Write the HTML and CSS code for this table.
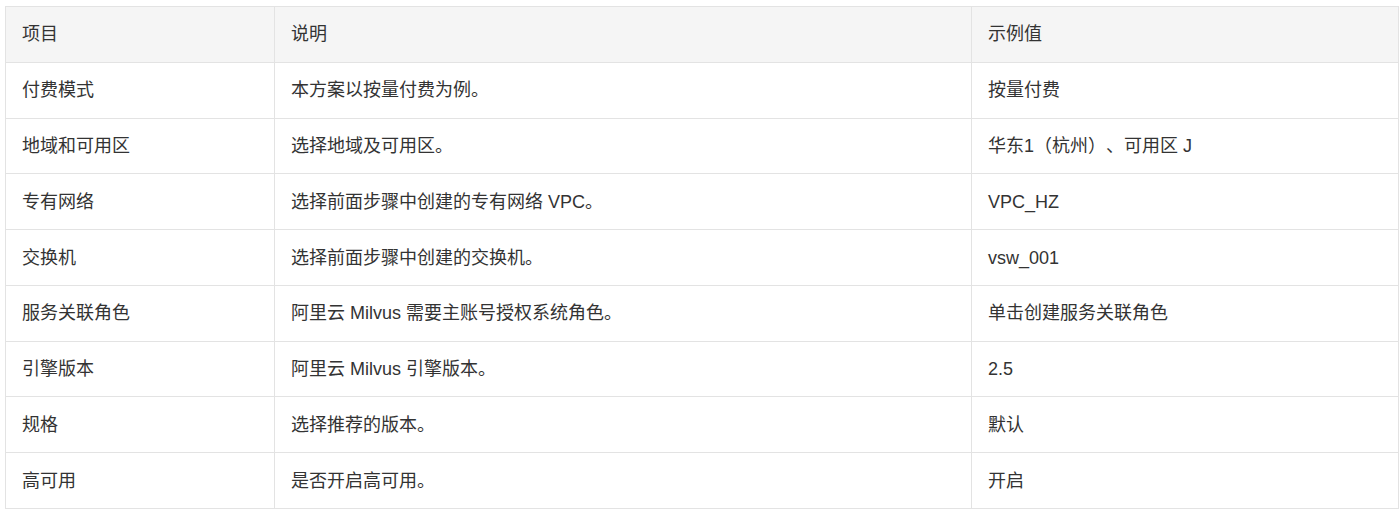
FILE: index.html
```html
<!DOCTYPE html>
<html lang="zh-CN">
<head>
    <meta charset="UTF-8">
    <meta name="viewport" content="width=device-width, initial-scale=1.0">
    <title>参数配置</title>
    <link rel="stylesheet" href="styles.css">
</head>
<body>
    <table class="spec-table">
        <colgroup>
            <col class="col-item">
            <col class="col-desc">
            <col class="col-value">
        </colgroup>
        <thead>
            <tr>
                <th>项目</th>
                <th>说明</th>
                <th>示例值</th>
            </tr>
        </thead>
        <tbody>
            <tr>
                <td>付费模式</td>
                <td>本方案以按量付费为例。</td>
                <td>按量付费</td>
            </tr>
            <tr>
                <td>地域和可用区</td>
                <td>选择地域及可用区。</td>
                <td>华东1（杭州）、可用区 J</td>
            </tr>
            <tr>
                <td>专有网络</td>
                <td>选择前面步骤中创建的专有网络 VPC。</td>
                <td>VPC_HZ</td>
            </tr>
            <tr>
                <td>交换机</td>
                <td>选择前面步骤中创建的交换机。</td>
                <td>vsw_001</td>
            </tr>
            <tr>
                <td>服务关联角色</td>
                <td>阿里云 Milvus 需要主账号授权系统角色。</td>
                <td>单击创建服务关联角色</td>
            </tr>
            <tr>
                <td>引擎版本</td>
                <td>阿里云 Milvus 引擎版本。</td>
                <td>2.5</td>
            </tr>
            <tr>
                <td>规格</td>
                <td>选择推荐的版本。</td>
                <td>默认</td>
            </tr>
            <tr>
                <td>高可用</td>
                <td>是否开启高可用。</td>
                <td>开启</td>
            </tr>
        </tbody>
    </table>
</body>
</html>
```

FILE: styles.css
```css
body, html {
    margin: 0;
    padding: 0;
    background: #fff;
}
body {
    padding: 6px 1px 0 5px;
    font-family: "Liberation Sans", "Noto Sans CJK SC", sans-serif;
    font-size: 18px;
    color: #333;
    text-spacing-trim: space-all;
}
.spec-table {
    width: 100%;
    border-collapse: collapse;
    table-layout: fixed;
}
.col-item {
    width: 269px;
}
.col-desc {
    width: 697px;
}
.spec-table th,
.spec-table td {
    border: 1px solid #e3e3e3;
    padding: 15.4px 16px;
    line-height: 24px;
    text-align: left;
    font-weight: normal;
    vertical-align: middle;
}
.spec-table thead th {
    background-color: #f5f5f5;
}
```
